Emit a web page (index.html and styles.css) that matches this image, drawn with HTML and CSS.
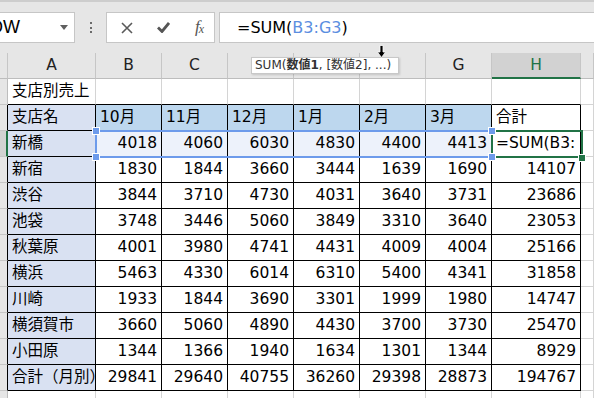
FILE: index.html
```html
<!DOCTYPE html>
<html lang="ja">
<head>
<meta charset="utf-8">
<title>Excel SUM</title>
<link rel="stylesheet" href="styles.css">
</head>
<body>
<div class="topbar">
  <div class="namebox"><span class="nametext">ROW</span><svg class="dd" width="8" height="5" viewBox="0 0 8 5"><path d="M0 0H8L4 5Z" fill="#5f5f5f"/></svg></div>
  <div class="dots"><i></i><i></i><i></i></div>
  <div class="fxbox">
    <svg width="12" height="12" viewBox="0 0 12 12"><path d="M1 1L11 11M11 1L1 11" stroke="#5a5a5a" stroke-width="1.6" fill="none"/></svg>
    <svg width="13" height="11" viewBox="0 0 13 11"><path d="M1 5.5L5 9.5L12 1" stroke="#555" stroke-width="2.8" fill="none"/></svg>
    <span class="fx"><i>f</i><sub>x</sub></span>
  </div>
  <div class="formula">=SUM(<span class="ref">B3:G3</span>)</div>
</div>

<div class="grid">
  <div class="ch corner"></div><div class="ch">A</div><div class="ch">B</div><div class="ch">C</div><div class="ch">D</div><div class="ch">E</div><div class="ch">F</div><div class="ch">G</div><div class="ch hsel">H</div><div class="ch"></div>

  <div class="rh"></div><div class="c tb">支店別売上</div><div class="c tb"></div><div class="c tb"></div><div class="c tb"></div><div class="c tb"></div><div class="c tb"></div><div class="c tb"></div><div class="c tb"></div><div class="c"></div>

  <div class="rh tl"></div><div class="t a">支店名</div><div class="t m">10月</div><div class="t m">11月</div><div class="t m">12月</div><div class="t m">1月</div><div class="t m">2月</div><div class="t m">3月</div><div class="t">合計</div><div class="c"></div>

  <div class="rh tl rsel"></div><div class="t a">新橋</div><div class="t n hl">4018</div><div class="t n hl">4060</div><div class="t n hl">6030</div><div class="t n hl">4830</div><div class="t n hl">4400</div><div class="t n hl">4413</div><div class="t clip">=SUM(B3:</div><div class="c"></div>

  <div class="rh tl"></div><div class="t a">新宿</div><div class="t n">1830</div><div class="t n">1844</div><div class="t n">3660</div><div class="t n">3444</div><div class="t n">1639</div><div class="t n">1690</div><div class="t n">14107</div><div class="c"></div>

  <div class="rh tl"></div><div class="t a">渋谷</div><div class="t n">3844</div><div class="t n">3710</div><div class="t n">4730</div><div class="t n">4031</div><div class="t n">3640</div><div class="t n">3731</div><div class="t n">23686</div><div class="c"></div>

  <div class="rh tl"></div><div class="t a">池袋</div><div class="t n">3748</div><div class="t n">3446</div><div class="t n">5060</div><div class="t n">3849</div><div class="t n">3310</div><div class="t n">3640</div><div class="t n">23053</div><div class="c"></div>

  <div class="rh tl"></div><div class="t a">秋葉原</div><div class="t n">4001</div><div class="t n">3980</div><div class="t n">4741</div><div class="t n">4431</div><div class="t n">4009</div><div class="t n">4004</div><div class="t n">25166</div><div class="c"></div>

  <div class="rh tl"></div><div class="t a">横浜</div><div class="t n">5463</div><div class="t n">4330</div><div class="t n">6014</div><div class="t n">6310</div><div class="t n">5400</div><div class="t n">4341</div><div class="t n">31858</div><div class="c"></div>

  <div class="rh tl"></div><div class="t a">川崎</div><div class="t n">1933</div><div class="t n">1844</div><div class="t n">3690</div><div class="t n">3301</div><div class="t n">1999</div><div class="t n">1980</div><div class="t n">14747</div><div class="c"></div>

  <div class="rh tl"></div><div class="t a">横須賀市</div><div class="t n">3660</div><div class="t n">5060</div><div class="t n">4890</div><div class="t n">4430</div><div class="t n">3700</div><div class="t n">3730</div><div class="t n">25470</div><div class="c"></div>

  <div class="rh tl"></div><div class="t a">小田原</div><div class="t n">1344</div><div class="t n">1366</div><div class="t n">1940</div><div class="t n">1634</div><div class="t n">1301</div><div class="t n">1344</div><div class="t n">8929</div><div class="c"></div>

  <div class="rh tl"></div><div class="t a clip">合計（月別）</div><div class="t n">29841</div><div class="t n">29640</div><div class="t n">40755</div><div class="t n">36260</div><div class="t n">29398</div><div class="t n">28873</div><div class="t n">194767</div><div class="c"></div>

  <div class="rh"></div><div class="c"></div><div class="c"></div><div class="c"></div><div class="c"></div><div class="c"></div><div class="c"></div><div class="c"></div><div class="c"></div><div class="c"></div>
</div>

<div class="selrange"></div>
<div class="active"></div>
<span class="hdl h1"></span><span class="hdl h2"></span><span class="hdl h3"></span><span class="hdl h4"></span>
<span class="ghdl"></span>

<div class="tip">SUM(<b>数値1</b>, [数値2], ...)</div>
<svg class="cursor" width="9" height="13" viewBox="0 0 9 13"><path d="M3 0.5H6V7H8.5L4.5 12.5L0.5 7H3Z" fill="#000" stroke="#fff" stroke-width="0.8"/></svg>
</body>
</html>
```

FILE: styles.css
```css
* { box-sizing: border-box; }
html, body { margin: 0; padding: 0; }
body {
  width: 594px;
  height: 398px;
  overflow: hidden;
  position: relative;
  background: #fff;
  font-family: "DejaVu Sans", "Noto Sans CJK JP", sans-serif;
  color: #000;
}

/* formula bar */
.topbar {
  height: 53px;
  background: #e6e6e6;
  border-top: 2px solid #cdcdcd;
  padding-top: 10px;
  display: flex;
  align-items: flex-start;
}
.namebox {
  width: 75px;
  height: 31px;
  background: #fff;
  border: 1px solid #c6c6c6;
  border-left: 0;
  overflow: hidden;
  display: flex;
  align-items: center;
  justify-content: space-between;
  padding-right: 6px;
  font-family: "Liberation Sans", sans-serif;
  font-size: 18px;
}
.nametext { margin-left: -24px; }
.dd { flex: none; }
.dots {
  width: 31px;
  height: 31px;
  display: flex;
  flex-direction: column;
  align-items: center;
  justify-content: center;
  gap: 2.5px;
}
.dots i { display: block; width: 2px; height: 2px; background: #6a6a6a; }
.fxbox {
  width: 109px;
  height: 31px;
  background: #fff;
  border: 1px solid #c6c6c6;
  display: flex;
  align-items: center;
  justify-content: space-between;
  padding: 0 10px 0 14px;
}
.fx {
  font-family: "Liberation Serif", serif;
  color: #555;
  font-size: 17px;
  line-height: 20px;
}
.fx i { font-style: italic; }
.fx sub { font-size: 12px; font-style: italic; vertical-align: -1px; margin-left: -1px; }
.formula {
  flex: 1;
  margin-left: 4px;
  margin-right: -2px;
  height: 31px;
  background: #fff;
  border: 1px solid #c6c6c6;
  padding-left: 17px;
  font-size: 16px;
  line-height: 29px;
}
.ref { color: #5b8ee0; }

/* sheet grid */
.grid {
  display: grid;
  grid-template-columns: 8px 88px 66px 66px 66px 66px 66px 66px 89px 1fr;
  grid-auto-rows: 26px;
  font-size: 15.5px;
}
.grid > div {
  border-right: 1px solid #d4d4d4;
  border-bottom: 1px solid #d4d4d4;
  white-space: nowrap;
  overflow: hidden;
  line-height: 25px;
  padding: 0 4px;
}
.grid > .ch {
  background: #e6e6e6;
  border-right-color: #c6c6c6;
  border-bottom-color: #bdbdbd;
  text-align: center;
  color: #222;
}
.grid > .ch.corner { padding: 0; }
.grid > .ch.hsel {
  background: #d2d2d2;
  color: #217346;
  border-bottom: 2px solid #217346;
}
.grid > .rh {
  background: #e6e6e6;
  border-right-color: #bdbdbd;
  border-bottom-color: #c6c6c6;
  padding: 0;
}
.grid > .rh.tl { border-right-color: #000; }
.grid > .rh.rsel { background: #d2d2d2; border-right: 2px solid #217346; }
.grid > .tb { border-bottom-color: #000; }
.grid > .t { border-right-color: #000; border-bottom-color: #000; }
.grid > .a { background: #d9e1f2; }
.grid > .m { background: #bdd7ee; }
.grid > .n { text-align: right; }
.grid > .hl { background: #edf2fb; }
.grid > .clip { text-overflow: clip; }

/* selection overlays */
.selrange {
  position: absolute;
  left: 95px;
  top: 130px;
  width: 398px;
  height: 28px;
  border: 2px solid #6d9beb;
}
.active {
  position: absolute;
  left: 491px;
  top: 130px;
  width: 92px;
  height: 28px;
  border: 2px solid #217346;
}
.hdl {
  position: absolute;
  width: 6px;
  height: 6px;
  background: #6d9beb;
  border: 1px solid #fff;
  box-sizing: content-box;
}
.h1 { left: 92px; top: 127px; }
.h2 { left: 92px; top: 153px; }
.h3 { left: 488px; top: 127px; }
.h4 { left: 488px; top: 153px; }
.ghdl {
  position: absolute;
  left: 578px;
  top: 154px;
  width: 6px;
  height: 6px;
  background: #217346;
  border: 1px solid #fff;
  box-sizing: content-box;
}

/* tooltip */
.tip {
  position: absolute;
  left: 251px;
  top: 57px;
  width: 148px;
  height: 17px;
  padding: 0 3px;
  background: #fff;
  border: 1px solid #c8c8c8;
  box-shadow: 1px 1px 2px rgba(0,0,0,0.15);
  font-size: 12px;
  line-height: 15px;
  color: #333;
  white-space: nowrap;
  overflow: hidden;
}
.tip b { font-weight: bold; }
.cursor {
  position: absolute;
  left: 377px;
  top: 45px;
}
```
